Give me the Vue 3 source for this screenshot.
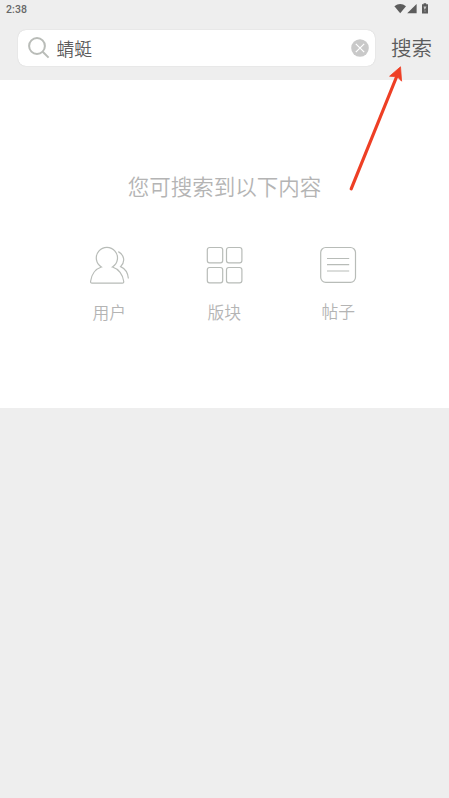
<script setup>
import { ref } from 'vue'

const keyword = ref('蜻蜓')
const kinds = [
  { id: 'user', label: '用户' },
  { id: 'board', label: '版块' },
  { id: 'post', label: '帖子' },
]
</script>

<template>
  <div class="screen">
    <header class="top">
      <div class="status">
        <span class="clock">2:38</span>
        <svg class="signals" width="36" height="12" viewBox="0 0 36 12">
          <path d="M0.4 3.2Q6.2 -1.2 12 3.2L6.2 10.3Z" />
          <path d="M22.6 1V10.3H13.2Z" />
          <path d="M29.6 1.3V0.2H32.2V1.3H34V10.4H28V1.3Z" />
          <path class="bolt" d="M29.5 3.6H32.5L31.5 5.5 31 6.6H30.5ZM30.5 7.4H31.5V8.5H30.5Z" />
        </svg>
      </div>
      <div class="bar">
        <div class="box">
          <svg class="lens" width="24" height="24" viewBox="0 0 24 24">
            <circle cx="10" cy="10" r="7.9" />
            <path d="M15.7 15.7L21.6 21.6" />
          </svg>
          <span class="keyword">{{ keyword }}</span>
          <svg class="clear" width="18" height="18" viewBox="0 0 18 18">
            <circle cx="9" cy="9" r="8.8" />
            <path d="M4.8 4.8L13.2 13.2M13.2 4.8L4.8 13.2" />
          </svg>
        </div>
        <span class="go">搜索</span>
      </div>
    </header>

    <main class="panel">
      <h1 class="title">您可搜索到以下内容</h1>
      <div class="kinds">
        <div v-for="k in kinds" :key="k.id" class="kind" :class="k.id">
          <svg class="icon" width="40" height="38" viewBox="0 0 40 38">
            <template v-if="k.id === 'user'">
              <path d="M12.4 21A10.6 10.6 0 1 1 23.4 21C29.7 22.8 33.9 28.6 34.7 35.3Q34.9 37.2 33.4 37.2H3Q1.4 37.2 1.6 35.3C2.4 28.6 6.4 22.8 12.4 21Z" />
              <path d="M29.3 5.6C35 8.6 36.8 15.7 31.6 20.6C35.9 22.5 38.9 27.1 39.4 32.5" />
            </template>
            <template v-else-if="k.id === 'board'">
              <rect x="3.3" y="1.5" width="15.4" height="15.4" rx="2.3" />
              <rect x="22.5" y="1.5" width="15.4" height="15.4" rx="2.3" />
              <rect x="3.3" y="21.5" width="15.4" height="15.4" rx="2.3" />
              <rect x="22.5" y="21.5" width="15.4" height="15.4" rx="2.3" />
            </template>
            <template v-else>
              <rect x="2.7" y="1.5" width="34.8" height="34.8" rx="5" />
              <path d="M9 12.5H31.2M9 18.6H31.2M9 25H31.2" />
            </template>
          </svg>
          <span class="label">{{ k.label }}</span>
        </div>
      </div>
    </main>

    <svg class="pointer" width="56" height="128" viewBox="0 0 56 128">
      <path class="shaft" d="M4.2 124.8L49.5 13" />
      <path class="head" d="M53.5 2.8L42.6 12.2 48 12.6 51.4 13.8 54.6 17.2Z" />
    </svg>
  </div>
</template>

<style>
body {
  background: #eee;
}
</style>

<style scoped>
.screen {
  position: relative;
  height: 798px;
  overflow: hidden;
  background: #eee;
  font-family: "Noto Sans CJK SC DemiLight", "Noto Sans CJK SC", sans-serif;
  font-weight: 350;
}
.top {
  box-sizing: border-box;
  height: 80px;
}
.status {
  display: flex;
  justify-content: space-between;
  height: 30px;
  padding: 3px 19px 0 6px;
  box-sizing: border-box;
}
.clock {
  font: 500 10.5px/13px Roboto, sans-serif;
  letter-spacing: 0.1px;
  color: #686868;
}
.signals {
  fill: #5c5c5c;
}
.signals .bolt {
  fill: #c8c8c8;
}
.bar {
  display: flex;
  align-items: center;
  gap: 16px;
  padding-left: 18px;
}
.box {
  display: flex;
  align-items: center;
  box-sizing: border-box;
  width: 357px;
  height: 36px;
  padding: 0 6px 0 9px;
  border-radius: 8px;
  background: #fff;
  box-shadow: 0 0 1px #bbb;
}
.lens {
  fill: none;
  stroke: #b9bcb8;
  stroke-width: 2;
}
.keyword {
  flex: 1;
  margin-left: 5.5px;
  font-size: 17.8px;
  line-height: 26px;
  color: #5c5c5c;
}
.clear {
  fill: #c9c9c9;
}
.clear path {
  fill: none;
  stroke: #fff;
  stroke-width: 1.2;
}
.go {
  margin-top: -2px;
  font-size: 20.6px;
  line-height: 30px;
  color: #5c5c5c;
}
.panel {
  box-sizing: border-box;
  height: 328px;
  padding-top: 90px;
  background: #fff;
}
.title {
  margin: 0;
  font-size: 21.5px;
  font-weight: 350;
  line-height: 32px;
  text-align: center;
  color: #b4b4b4;
}
.kinds {
  display: grid;
  grid-template-columns: repeat(3, 114.5px);
  padding: 44px 0 0 52px;
}
.kind {
  display: flex;
  flex-direction: column;
  align-items: center;
}
.icon {
  fill: none;
  stroke: #b8bcb8;
  stroke-width: 1.2;
}
.label {
  margin-top: 15px;
  font-size: 16.8px;
  line-height: 26px;
  color: #b4b4b4;
}
.board .label {
  padding-left: 1px;
}
.post .label {
  margin-top: 14px;
}
.pointer {
  position: absolute;
  left: 347px;
  top: 64px;
  fill: #ee3f25;
}
.shaft {
  stroke: #ee3f25;
  stroke-width: 3.2;
  stroke-linecap: round;
}
.head {
  stroke: #ee3f25;
  stroke-width: 0.8;
  stroke-linejoin: round;
}
</style>
